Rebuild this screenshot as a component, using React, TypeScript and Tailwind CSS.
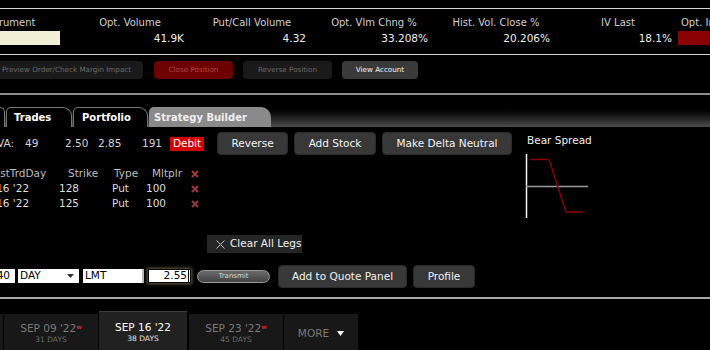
import React from 'react';

const stats = [
  { label: 'Instrument', value: '', box: 'cream' },
  { label: 'Opt. Volume', value: '41.9K' },
  { label: 'Put/Call Volume', value: '4.32' },
  { label: 'Opt. Vlm Chng %', value: '33.208%' },
  { label: 'Hist. Vol. Close %', value: '20.206%' },
  { label: 'IV Last', value: '18.1%' },
  { label: 'Opt. Implied Vol. %', value: '', box: 'red' },
];

const legs = [
  { date: "Sep 16 '22", strike: '128', type: 'Put', mult: '100' },
  { date: "Sep 16 '22", strike: '125', type: 'Put', mult: '100' },
];

const RemoveX = () => (
  <svg width="8" height="8" viewBox="0 0 8 8" className="block">
    <path d="M1 1 L7 7 M7 1 L1 7" stroke="#9a3a3a" strokeWidth="2" />
  </svg>
);

const ActionButton = ({ label, w }: { label: string; w: string }) => (
  <button className={`${w} h-[23px] rounded-[4px] bg-[#383838] border border-[#2a2a2a] text-[#f2f2f2] text-[10.5px] leading-none`}>
    {label}
  </button>
);

const App: React.FC = () => {
  return (
    <div className="w-[710px] h-[350px] overflow-hidden bg-black font-['DejaVu_Sans',Verdana,sans-serif] text-white">
      {/* Quote stats */}
      <div className="mt-[8px] border-t border-b border-[#d8d8d8] pt-[8px] pb-[9px] overflow-hidden">
        <div className="flex -ml-[56px]">
          {stats.map((s, i) => (
            <div key={s.label} className="w-[122px] shrink-0">
              <div
                className={`h-[12px] text-[10px] leading-[12px] text-[#cfcfcf] whitespace-nowrap ${
                  i === stats.length - 1 ? 'text-left pl-[5px]' : 'text-center pl-[6px]'
                }`}
              >
                {s.label}
              </div>
              <div className="mt-[2px] h-[14px] text-[10.5px] leading-[14px] text-[#efefef] text-right pr-[4px]">
                {s.box === 'cream' && <div className="h-full mr-[2px] bg-[#f1efd6]" />}
                {s.box === 'red' && <div className="h-full ml-[2px] bg-[#8b0000]" />}
                {!s.box && s.value}
              </div>
            </div>
          ))}
        </div>
      </div>

      {/* Order toolbar */}
      <div className="pt-[6px] pb-[14px] border-b-2 border-[#8c8c8c] flex items-center text-[7.2px]">
        <div className="-ml-[10px] w-[153px] h-[18px] rounded-[4px] bg-[#1a1a1a] text-[#6a6a6a] flex items-center justify-center">
          Preview Order/Check Margin Impact
        </div>
        <div className="ml-[11px] w-[79px] h-[18px] rounded-[4px] bg-[#6e0000] text-[#b44a4a] flex items-center justify-center">
          Close Position
        </div>
        <div className="ml-[10px] w-[89px] h-[18px] rounded-[4px] bg-[#1a1a1a] text-[#6a6a6a] flex items-center justify-center">
          Reverse Position
        </div>
        <div className="ml-[10px] w-[76px] h-[18px] rounded-[4px] bg-[#3a3a3a] text-[#f4f4f4] flex items-center justify-center">
          View Account
        </div>
      </div>

      {/* Panel tabs */}
      <div className="h-[32px] bg-gradient-to-b from-black from-30% to-[#4e4e4e] flex items-end text-[10px] font-bold">
        <div className="w-[5px] h-[20px] border-t border-r border-[#777] rounded-tr-[6px] bg-black" />
        <div className="ml-[1px] w-[66px] h-[20px] border-t border-x border-[#777] rounded-tl-[5px] rounded-tr-[9px] bg-black flex items-center pl-[7px]">
          Trades
        </div>
        <div className="ml-[1px] w-[75px] h-[20px] border-t border-x border-[#777] rounded-tl-[5px] rounded-tr-[9px] bg-black flex items-center pl-[8px]">
          Portfolio
        </div>
        <div className="ml-[1px] w-[122px] h-[20px] rounded-tl-[5px] rounded-tr-[10px] bg-[#8a8a8a] text-[#f0f0f0] flex items-center pl-[5px]">
          Strategy Builder
        </div>
      </div>

      {/* Strategy builder body */}
      <div className="h-[172px] border-b-2 border-[#a8a8a8] flex text-[10.5px]">
        <div className="w-[521px] shrink-0">
          <div className="mt-[5px] h-[23px] flex items-center text-[#d4d4d4]">
            <span className="-ml-[3px] w-[28px]">VA:</span>
            <span className="w-[40px]">49</span>
            <span className="w-[33px]">2.50</span>
            <span className="w-[44px]">2.85</span>
            <span className="w-[28px]">191</span>
            <span className="w-[34px] h-[14px] bg-[#d40000] text-white flex items-center justify-center">Debit</span>
            <div className="ml-[13px] flex gap-[6px]">
              <ActionButton label="Reverse" w="w-[71px]" />
              <ActionButton label="Add Stock" w="w-[82px]" />
              <ActionButton label="Make Delta Neutral" w="w-[130px]" />
            </div>
          </div>

          <div className="mt-[11px] text-[#dedede]">
            <div className="h-[15px] flex items-center text-[#bdbdbd]">
              <span className="-ml-[12px] w-[80px] shrink-0">LastTrdDay</span>
              <span className="w-[46px]">Strike</span>
              <span className="w-[38px]">Type</span>
              <span className="w-[39px]">Mltplr</span>
              <RemoveX />
            </div>
            {legs.map((l) => (
              <div key={l.strike} className="h-[15px] flex items-center">
                <span className="-ml-[27px] w-[86px] shrink-0">{l.date}</span>
                <span className="w-[53px]">{l.strike}</span>
                <span className="w-[34px]">{l.type}</span>
                <span className="w-[45px]">{l.mult}</span>
                <RemoveX />
              </div>
            ))}
          </div>

          <div className="mt-[24px] ml-[207px] w-[95px] h-[18px] bg-[#262626] flex items-center gap-[5px] pl-[9px] text-[#f0f0f0]">
            <svg width="9" height="9" viewBox="0 0 9 9">
              <path d="M0.5 0.5 L8.5 8.5 M8.5 0.5 L0.5 8.5" stroke="#bdbdbd" strokeWidth="1" />
            </svg>
            Clear All Legs
          </div>

          <div className="mt-[11px] h-[24px] flex items-center text-black">
            <div className="-ml-[4px] w-[19px] h-[14px] bg-white flex items-center justify-end pr-[5px]">40</div>
            <div className="ml-[3px] w-[61px] h-[14px] bg-white flex items-center justify-between pl-[2px] pr-[5px]">
              DAY
              <svg width="7" height="4" viewBox="0 0 7 4"><path d="M0 0 H7 L3.5 4 Z" fill="#333" /></svg>
            </div>
            <div className="ml-[4px] w-[61px] h-[14px] bg-white border-r-2 border-[#bbb] flex items-center pl-[2px]">LMT</div>
            <div className="ml-[4px] w-[43px] h-[14px] bg-white border border-black shadow-[0_0_3px_1px_#6b6440] flex items-center justify-end pr-[1px]">
              2.55<span className="w-[1px] h-[12px] bg-black ml-[1px]" />
            </div>
            <div className="ml-[6px] w-[73px] h-[13px] rounded-full bg-gradient-to-b from-[#6a6a6a] to-[#444] border border-[#9a9a9a] text-[#d8d8d8] text-[7px] flex items-center justify-center">
              Transmit
            </div>
            <div className="ml-[8px] flex gap-[6px]">
              <ActionButton label="Add to Quote Panel" w="w-[129px]" />
              <ActionButton label="Profile" w="w-[62px]" />
            </div>
          </div>
        </div>

        <div className="pt-[6px]">
          <div className="ml-[6px] text-[#f0f0f0]">Bear Spread</div>
          <svg width="70" height="66" viewBox="0 0 70 66" className="mt-[5px] ml-[4px]">
            <line x1="1.5" y1="0" x2="1.5" y2="64" stroke="#f4f4f4" strokeWidth="1.5" />
            <line x1="1" y1="32.5" x2="63" y2="32.5" stroke="#9a9a9a" strokeWidth="1.5" />
            <polyline points="5,5.5 24,5.5 41,58 58,58" fill="none" stroke="#8a0000" strokeWidth="1.5" />
          </svg>
        </div>
      </div>

      {/* Expiry tabs */}
      <div className="pt-[12px] flex items-end">
        <div className="w-[3px] h-[36px] bg-[#181818]" />
        <div className="ml-[1px] w-[94px] h-[36px] bg-[#181818] flex flex-col items-center pt-[8px]">
          <div className="text-[10.5px] leading-[13px] text-[#7a7a7a]">
            SEP 09 '22<sup className="text-[6px] text-[#c03030] font-bold">w</sup>
          </div>
          <div className="text-[7.5px] leading-[10px] text-[#6a6a6a]">31 DAYS</div>
        </div>
        <div className="ml-[1px] w-[88px] h-[39px] bg-[#212121] border-t border-[#3c3c3c] flex flex-col items-center pt-[9px]">
          <div className="text-[10.5px] leading-[13px] text-white">SEP 16 '22</div>
          <div className="text-[7.5px] leading-[10px] text-[#e0e0e0]">38 DAYS</div>
        </div>
        <div className="ml-[2px] w-[94px] h-[36px] bg-[#181818] flex flex-col items-center pt-[8px]">
          <div className="text-[10.5px] leading-[13px] text-[#7a7a7a]">
            SEP 23 '22<sup className="text-[6px] text-[#c03030] font-bold">w</sup>
          </div>
          <div className="text-[7.5px] leading-[10px] text-[#6a6a6a]">45 DAYS</div>
        </div>
        <div className="ml-[1px] w-[74px] h-[36px] bg-[#181818] flex items-center justify-center gap-[8px] pt-[3px] text-[10.5px] text-[#7a7a7a]">
          MORE
          <svg width="7" height="5" viewBox="0 0 7 5"><path d="M0 0 H7 L3.5 5 Z" fill="#ffffff" /></svg>
        </div>
      </div>
    </div>
  );
};

export default App;
